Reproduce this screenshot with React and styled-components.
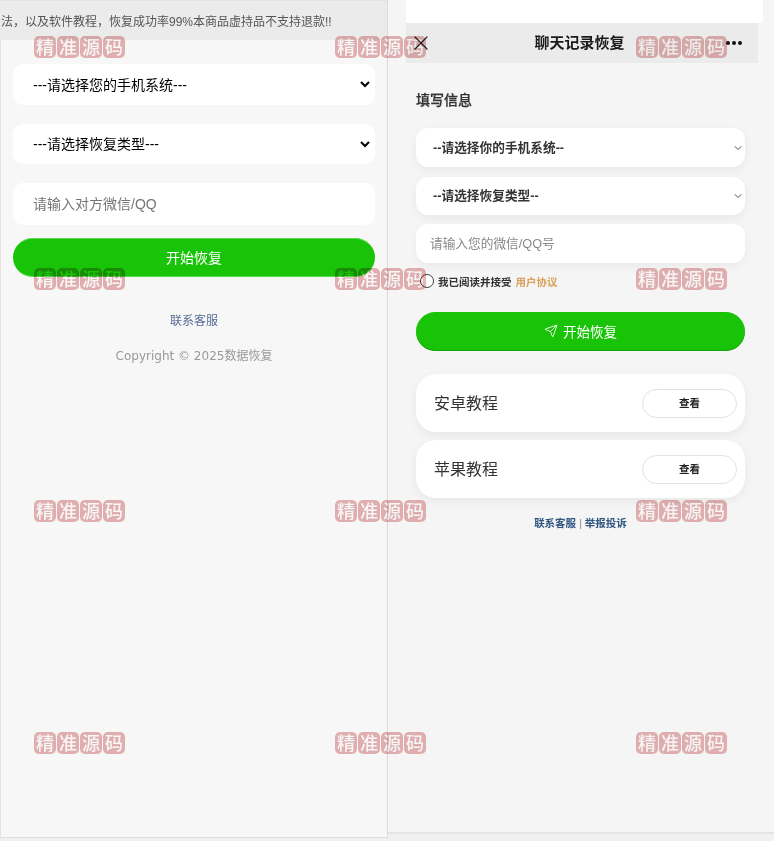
import styled, { createGlobalStyle } from 'styled-components';
import { ChevronDown, Send, X } from 'lucide-react';

const GlobalStyle = createGlobalStyle`
  html, body {
    margin: 0;
    padding: 0;
    background: #f0f0f0;
  }
  * {
    box-sizing: border-box;
  }
`;

const cjk = `"Liberation Sans", "Noto Sans CJK SC", sans-serif`;

const Page = styled.div`
  position: relative;
  display: flex;
  width: 774px;
  height: 841px;
  overflow: hidden;
  font-family: ${cjk};
  background: #f0f0f0;
`;

const LeftPanel = styled.section`
  display: flex;
  flex-direction: column;
  width: 388px;
  height: 838px;
  background: #f7f7f7;
  border-left: 1px solid #e2e2e2;
  border-right: 1px solid #dcdcdc;
  border-bottom: 1px solid #dedede;
  filter: blur(0.3px);
`;

const Notice = styled.div`
  height: 40px;
  margin-left: -1px;
  padding: 13px 0 0 1px;
  font-size: 12px;
  line-height: 16px;
  color: #555;
  white-space: nowrap;
  background: #ebebeb;
  border-top: 1px solid #e2e2e2;
`;

const LeftForm = styled.div`
  display: flex;
  flex-direction: column;
  padding: 24px 12px 0;
`;

const NativeSelect = styled.select`
  width: 100%;
  height: ${(p) => p.$h}px;
  margin-bottom: ${(p) => p.$mb}px;
  padding: 0 15px 0 16px;
  font-family: ${cjk};
  font-size: 14px;
  color: #000;
  background: #fff;
  border: 0;
  border-right: 2px solid #fff;
  border-radius: 10px;
  outline: 0;
`;

const LeftInput = styled.input`
  width: 100%;
  height: 42px;
  margin-bottom: 13px;
  padding: 0 20px;
  font-family: ${cjk};
  font-size: 14px;
  background: #fff;
  border: 0;
  border-radius: 10px;
  outline: 0;
  &::placeholder {
    color: #757575;
  }
`;

const LeftButton = styled.button`
  width: 100%;
  height: 39px;
  padding-bottom: 3px;
  font-family: ${cjk};
  font-size: 14px;
  color: #fff;
  background: #19c408;
  border: 0;
  border-top: 1px solid #5ad94e;
  border-bottom: 1px solid #5ad94e;
  border-radius: 20px;
`;

const ServiceLink = styled.a`
  margin-top: 36px;
  font-size: 12px;
  line-height: 16px;
  color: #576b95;
  text-align: center;
`;

const Copyright = styled.div`
  margin-top: 19px;
  font-family: "DejaVu Sans", "Noto Sans CJK SC", sans-serif;
  font-size: 12px;
  line-height: 16px;
  color: #999;
  text-align: center;
`;

const RightPanel = styled.section`
  width: 386px;
  height: 834px;
  padding-left: 18px;
  background: #f5f5f5;
  border-bottom: 2px solid #e4e4e4;
  filter: blur(0.4px);
`;

const TopBand = styled.div`
  width: 357px;
  height: 23px;
  background: #fff;
`;

const Header = styled.header`
  display: flex;
  align-items: center;
  justify-content: space-between;
  width: 352px;
  height: 40px;
  padding: 0 16px 0 3px;
  background: #ebebeb;
`;

const HeaderTitle = styled.h1`
  margin: 0 0 3px;
  font-size: 15px;
  font-weight: 700;
  color: #1a1a1a;
`;

const Dots = styled.div`
  display: flex;
  gap: 2px;
`;

const Dot = styled.span`
  width: 4px;
  height: 4px;
  background: #111;
  border-radius: 50%;
`;

const RightForm = styled.div`
  display: flex;
  flex-direction: column;
  width: 329px;
  margin-left: 10px;
`;

const SectionTitle = styled.h2`
  margin: 28px 0 19px;
  font-size: 14px;
  line-height: 18px;
  font-weight: 500;
  color: #333;
  -webkit-text-stroke: 0.25px #333;
`;

const Field = styled.div`
  position: relative;
  display: flex;
  align-items: center;
  height: ${(p) => p.$h}px;
  margin-bottom: ${(p) => p.$mb}px;
  padding: 0 17px ${(p) => p.$pb}px;
  font-size: 12.7px;
  font-weight: 700;
  color: #333;
  background: #fff;
  border-radius: 12px;
  box-shadow: 0 3px 8px rgba(0, 0, 0, 0.06);
`;

const Caret = styled(ChevronDown)`
  position: absolute;
  right: 1px;
  top: 50%;
  width: 12px;
  height: 12px;
  margin-top: -6px;
  color: #555;
`;

const RightInput = styled.input`
  height: 39px;
  margin-bottom: 9px;
  padding: 0 14px;
  font-family: ${cjk};
  font-size: 12.7px;
  background: #fff;
  border: 0;
  border-radius: 12px;
  outline: 0;
  box-shadow: 0 3px 8px rgba(0, 0, 0, 0.05);
  &::placeholder {
    color: #888;
  }
`;

const Agree = styled.label`
  display: flex;
  align-items: center;
  gap: 4px;
  height: 18px;
  margin-left: 4px;
  font-size: 10.5px;
  font-weight: 700;
  color: #333;
`;

const Radio = styled.span`
  width: 14px;
  height: 14px;
  background: #fff;
  border: 1px solid #444;
  border-radius: 50%;
`;

const AgreeLink = styled.span`
  color: #d9a25f;
`;

const StartButton = styled.button`
  display: flex;
  align-items: center;
  justify-content: center;
  gap: 5px;
  height: 39px;
  margin: 22px 0 23px;
  padding-bottom: 3px;
  font-family: ${cjk};
  font-size: 13.5px;
  color: #fff;
  background: #19c408;
  border: 0;
  border-radius: 20px;
  box-shadow: inset 0 -1px 0 #12a605;
`;

const TutorialCard = styled.div`
  display: flex;
  align-items: center;
  justify-content: space-between;
  height: 58px;
  margin-bottom: ${(p) => p.$mb}px;
  padding: 0 8px 0 18px;
  background: #fff;
  border-radius: 20px;
  box-shadow: 0 3px 10px rgba(0, 0, 0, 0.06);
`;

const CardLabel = styled.span`
  margin-bottom: 3px;
  font-size: 16px;
  color: #333;
`;

const ViewButton = styled.button`
  width: 95px;
  height: 29px;
  padding-bottom: 2px;
  font-family: ${cjk};
  font-size: 10.5px;
  font-weight: 700;
  color: #222;
  background: #fff;
  border: 1px solid #e2e2e2;
  border-radius: 15px;
`;

const FooterLinks = styled.div`
  margin-top: 17px;
  font-size: 10.5px;
  line-height: 16px;
  font-weight: 700;
  color: #2f5580;
  text-align: center;
`;

const Divider = styled.span`
  margin: 0 3px;
  font-weight: 400;
  color: #888;
`;

const WatermarkLayer = styled.div`
  position: absolute;
  top: 36px;
  left: 34px;
  display: grid;
  grid-template-columns: repeat(3, 301px);
  grid-auto-rows: 232px;
  pointer-events: none;
  mix-blend-mode: multiply;
  filter: blur(0.5px);
`;

const Stamp = styled.div`
  display: flex;
  gap: 1px;
  height: 22px;
`;

const StampChar = styled.span`
  width: 22px;
  height: 22px;
  font-family: "Noto Sans CJK SC", sans-serif;
  font-size: 18px;
  line-height: 21px;
  font-weight: 500;
  color: #fff;
  text-align: center;
  background: #e8b4b4;
  border-radius: 5px;
`;

const stamps = Array.from({ length: 12 }, (_, i) => i);

export default function App() {
  return (
    <Page>
      <GlobalStyle />
      <LeftPanel>
        <Notice>法，以及软件教程，恢复成功率99%本商品虚持品不支持退款!!</Notice>
        <LeftForm>
          <NativeSelect $h={41} $mb={19}>
            <option>---请选择您的手机系统---</option>
          </NativeSelect>
          <NativeSelect $h={40} $mb={19}>
            <option>---请选择恢复类型---</option>
          </NativeSelect>
          <LeftInput placeholder="请输入对方微信/QQ" />
          <LeftButton>开始恢复</LeftButton>
          <ServiceLink>联系客服</ServiceLink>
          <Copyright>Copyright © 2025数据恢复</Copyright>
        </LeftForm>
      </LeftPanel>
      <RightPanel>
        <TopBand />
        <Header>
          <X size={24} strokeWidth={1.2} color="#222" />
          <HeaderTitle>聊天记录恢复</HeaderTitle>
          <Dots>
            <Dot />
            <Dot />
            <Dot />
          </Dots>
        </Header>
        <RightForm>
          <SectionTitle>填写信息</SectionTitle>
          <Field $h={39} $mb={10} $pb={2}>
            --请选择你的手机系统--
            <Caret />
          </Field>
          <Field $h={38} $mb={9} $pb={4}>
            --请选择恢复类型--
            <Caret />
          </Field>
          <RightInput placeholder="请输入您的微信/QQ号" />
          <Agree>
            <Radio />
            我已阅读并接受
            <AgreeLink>用户协议</AgreeLink>
          </Agree>
          <StartButton>
            <Send size={14} strokeWidth={1.5} />
            开始恢复
          </StartButton>
          <TutorialCard $mb={8}>
            <CardLabel>安卓教程</CardLabel>
            <ViewButton>查看</ViewButton>
          </TutorialCard>
          <TutorialCard $mb={0}>
            <CardLabel>苹果教程</CardLabel>
            <ViewButton>查看</ViewButton>
          </TutorialCard>
          <FooterLinks>
            联系客服<Divider>|</Divider>举报投诉
          </FooterLinks>
        </RightForm>
      </RightPanel>
      <WatermarkLayer>
        {stamps.map((i) => (
          <Stamp key={i}>
            {['精', '准', '源', '码'].map((c) => (
              <StampChar key={c}>{c}</StampChar>
            ))}
          </Stamp>
        ))}
      </WatermarkLayer>
    </Page>
  );
}
